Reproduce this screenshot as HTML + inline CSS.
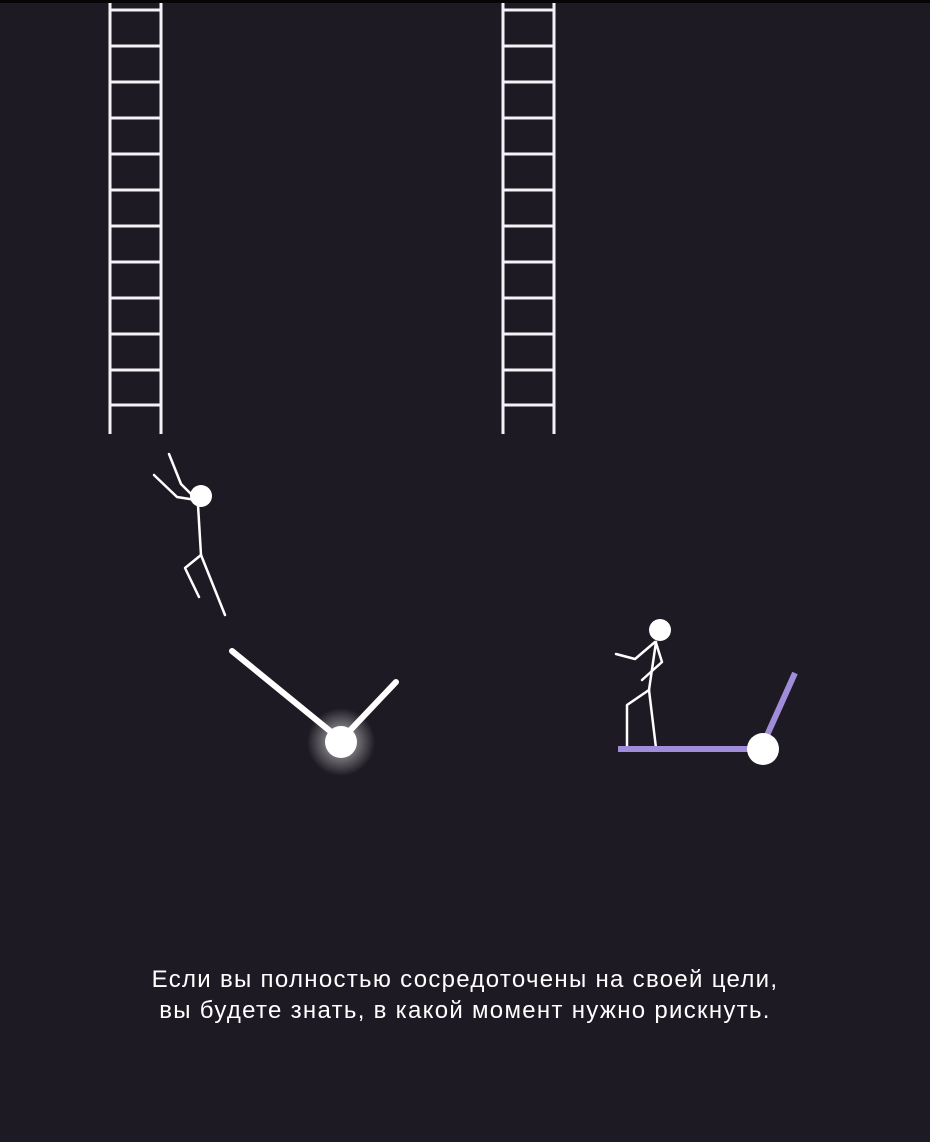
<!DOCTYPE html>
<html><head><meta charset="utf-8"><style>
html,body{margin:0;padding:0;background:#1e1a23;}
body{width:930px;height:1142px;position:relative;overflow:hidden;}
.top{position:absolute;left:0;top:0;width:930px;height:3px;background:#050505;}
svg{position:absolute;left:0;top:0;}
.t{position:absolute;left:0;width:930px;top:964px;text-align:center;color:#fff;font-family:"Liberation Sans",sans-serif;font-size:24px;line-height:31px;letter-spacing:1.3px;}
</style></head><body>
<div class="top"></div>
<svg width="930" height="1142" viewBox="0 0 930 1142">
<defs>
<radialGradient id="g"><stop offset="0.3" stop-color="#fff" stop-opacity="0.5"/><stop offset="1" stop-color="#fff" stop-opacity="0"/></radialGradient>
</defs>
<g stroke="#f4f2f6" stroke-width="3" fill="none">
<line x1="110" y1="3" x2="110" y2="434"/><line x1="161" y1="3" x2="161" y2="434"/>
<line x1="503" y1="3" x2="503" y2="434"/><line x1="554" y1="3" x2="554" y2="434"/>
<path d="M110 10H161M110 46H161M110 82H161M110 118H161M110 154H161M110 190H161M110 226H161M110 262H161M110 298H161M110 334H161M110 370H161M110 405H161"/>
<path d="M503 10H554M503 46H554M503 82H554M503 118H554M503 154H554M503 190H554M503 226H554M503 262H554M503 298H554M503 334H554M503 370H554M503 405H554"/>
</g>
<g stroke="#fff" stroke-width="2.5" fill="none" stroke-linecap="round" stroke-linejoin="round">
<path d="M169 454L181 484L195 498"/>
<path d="M154 475L177 497L196 500"/>
<path d="M198 505L201 555"/>
<path d="M201 555L185 568L199 597"/>
<path d="M201 555L225 615"/>
<path d="M656 642L649 690"/>
<path d="M649 690L627 705L627 748"/>
<path d="M649 690L656 748"/>
<path d="M616 654L635 659L655 642"/>
<path d="M656 643L662 662L642 680"/>
</g>
<circle cx="201" cy="496" r="11" fill="#fff"/>
<circle cx="660" cy="630" r="11" fill="#fff"/>
<circle cx="341" cy="742" r="34" fill="url(#g)"/>
<g stroke="#fff" stroke-width="6" stroke-linecap="round">
<line x1="232" y1="651" x2="341" y2="740"/><line x1="341" y1="740" x2="396" y2="682"/>
</g>
<circle cx="341" cy="742" r="16" fill="#fff"/>
<g stroke="#a08cd8" stroke-width="6">
<line x1="618" y1="749" x2="760" y2="749"/><line x1="764" y1="742" x2="795" y2="673"/>
</g>
<circle cx="763" cy="749" r="16" fill="#fff"/>
</svg>
<div class="t">Если вы полностью сосредоточены на своей цели,<br>вы будете знать, в какой момент нужно рискнуть.</div>
</body></html>
